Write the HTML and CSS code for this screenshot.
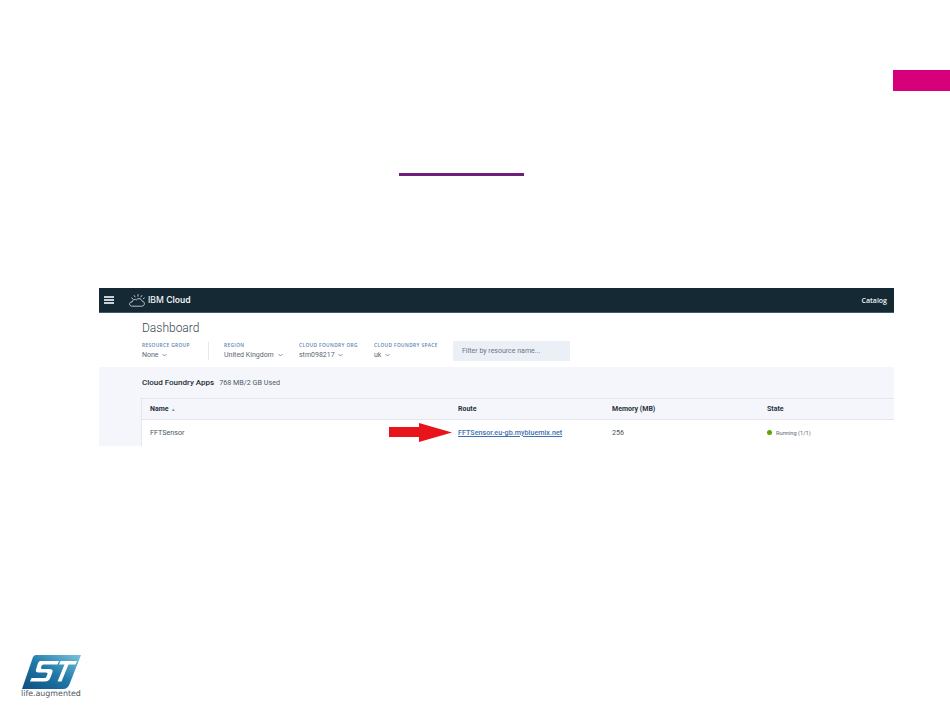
FILE: index.html
```html
<!DOCTYPE html>
<html lang="en">
<head>
<meta charset="utf-8">
<title>IBM Cloud Dashboard</title>
<link rel="stylesheet" href="styles.css">
</head>
<body>
<main class="slide">
  <div class="tab"></div>
  <div class="rule"></div>

  <section class="shot">
    <header class="topbar">
      <div class="brand">
        <span class="burger"><i></i><i></i><i></i></span>
        <svg class="cloud" width="16" height="13" viewBox="0 0 16 13" fill="none" stroke="#dfe6ea" stroke-width=".8">
          <path d="M3.2 12.2h9.6c1.5 0 2.6-1.1 2.6-2.5 0-1.3-1-2.4-2.3-2.5-.3-1.6-1.6-2.6-3.1-2.6-1 0-1.9.4-2.5 1.2-.5-.3-1-.4-1.6-.4-1.5 0-2.7 1.1-2.8 2.6C1.2 8 .5 9 .5 10c0 1.300 1.200 2.200 2.700 2.200z"/>
          <path d="M9 .2v2.400M5 1.200l1.200 2M13 1.200l-1.200 2M2.300 3.700l1.700 1.200M15.700 3.700l-1.700 1.200"/>
        </svg>
        <span class="product">IBM <b>Cloud</b></span>
      </div>
      <span class="catalog">Catalog</span>
    </header>

    <div class="intro">
      <h1>Dashboard</h1>
      <div class="filters">
        <div class="filter group">
          <span class="label">RESOURCE GROUP</span>
          <span class="value">None <svg class="chev" width="5" height="4" viewBox="0 0 5 4"><path d="M.5 1 2.500 3 4.500 1" fill="none" stroke="#5a7fa8" stroke-width=".8"/></svg></span>
        </div>
        <div class="filter region">
          <span class="label">REGION</span>
          <span class="value">United Kingdom <svg class="chev" width="5" height="4" viewBox="0 0 5 4"><path d="M.5 1 2.500 3 4.500 1" fill="none" stroke="#5a7fa8" stroke-width=".8"/></svg></span>
        </div>
        <div class="filter org">
          <span class="label">CLOUD FOUNDRY ORG</span>
          <span class="value">stm098217 <svg class="chev" width="5" height="4" viewBox="0 0 5 4"><path d="M.5 1 2.500 3 4.500 1" fill="none" stroke="#5a7fa8" stroke-width=".8"/></svg></span>
        </div>
        <div class="filter space">
          <span class="label">CLOUD FOUNDRY SPACE</span>
          <span class="value">uk <svg class="chev" width="5" height="4" viewBox="0 0 5 4"><path d="M.5 1 2.500 3 4.500 1" fill="none" stroke="#5a7fa8" stroke-width=".8"/></svg></span>
        </div>
        <div class="search">Filter by resource name...</div>
      </div>
    </div>

    <div class="apps">
      <div class="apps-title"><strong>Cloud Foundry Apps</strong><span>768 MB/2 GB Used</span></div>
      <div class="table">
        <div class="row head">
          <span class="col-name">Name <em class="sort">▴</em></span>
          <span class="col-route">Route</span>
          <span class="col-mem">Memory (MB)</span>
          <span class="col-state">State</span>
        </div>
        <div class="row body">
          <span class="col-name">FFTSensor</span>
          <span class="col-route"><a href="#">FFTSensor.eu-gb.mybluemix.net</a></span>
          <span class="col-mem">256</span>
          <span class="col-state"><i class="dot"></i>Running (1/1)</span>
        </div>
      </div>
    </div>

    <svg class="arrow" width="63" height="19" viewBox="0 0 63 19">
      <path d="M0 4h30V0l33 9.500L30 19v-5H0z" fill="#e8141c"/>
    </svg>
  </section>

  <figure class="logo">
    <svg width="60" height="34" viewBox="0 0 60 34">
      <defs>
        <linearGradient id="st" x1="0" y1="1" x2="1" y2="0">
          <stop offset="0" stop-color="#0d4f80"/>
          <stop offset=".5" stop-color="#1f78a8"/>
          <stop offset="1" stop-color="#7cc4de"/>
        </linearGradient>
      </defs>
      <path d="M11 2Q12 0 14 0H59L48 28Q46 34 41 34H0z" fill="url(#st)"/>
      <path d="M18.500 6H37L35.500 9.500H21.500Q20 9.500 19.500 11L19 12.500Q18.700 14 20.500 14H27Q31.500 14 30.500 17L28.500 22.500Q27 26.500 23 26.500H8L9.500 23H22.500Q24 23 24.500 21.500L25.500 19Q26 17.500 24 17.500H16.500Q13 17.500 14 14.500L15.500 9.500Q16.500 6 18.500 6Z" fill="#fff"/>
      <path d="M38.500 6H55L53.500 9.500H46.500L39.500 26.500H35.500L42.500 9.500H37Z" fill="#fff"/>
    </svg>
    <figcaption>life.augmented</figcaption>
  </figure>
</main>
</body>
</html>
```

FILE: styles.css
```css
* { box-sizing: border-box; }

html, body {
  margin: 0;
  padding: 0;
  background: #fff;
}

.slide {
  position: relative;
  width: 950px;
  height: 713px;
  overflow: hidden;
  font-family: Roboto, "Liberation Sans", sans-serif;
  color: #2b3440;
}

.tab {
  position: absolute;
  left: 893px;
  top: 70px;
  width: 57px;
  height: 21px;
  background: #d6007a;
}

.rule {
  position: absolute;
  left: 399px;
  top: 173px;
  width: 125px;
  height: 3px;
  background: #6d1f7a;
}

.shot {
  position: absolute;
  left: 99px;
  top: 288px;
  width: 795px;
  height: 158px;
  overflow: hidden;
  display: flex;
  flex-direction: column;
  background: #fff;
}

.topbar {
  height: 25px;
  flex: none;
  display: flex;
  align-items: center;
  justify-content: space-between;
  padding: 0 7px 0 5px;
  background: #152935;
  border-bottom: 1px solid #3d5a66;
  color: #fff;
}

.brand {
  display: flex;
  align-items: center;
}

.burger {
  width: 10px;
  display: flex;
  flex-direction: column;
  gap: 1.500px;
  margin-right: 15px;
}

.burger i {
  display: block;
  height: 1.500px;
  background: #c9d2d8;
}

.cloud {
  margin-right: 3px;
}

.product {
  font-family: Inter, Roboto, sans-serif;
  font-size: 8.600px;
  font-weight: 500;
  color: #eef2f4;
}

.product b {
  font-weight: 600;
}

.catalog {
  font-family: "Open Sans", sans-serif;
  font-size: 7px;
  font-weight: 600;
  color: #f2f5f6;
}

.intro {
  height: 54px;
  flex: none;
  padding: 8px 0 0 43px;
}

h1 {
  margin: 0;
  font-size: 12px;
  line-height: 15px;
  font-weight: 300;
  color: #3a4650;
}

.filters {
  margin-top: 6px;
  display: flex;
  align-items: flex-start;
}

.filter {
  display: flex;
  flex-direction: column;
  gap: 2px;
}

.group { width: 66px; }
.region { width: 76px; padding-left: 15px; border-left: 1px solid #e6e9ee; margin-right: 15px; }
.org { width: 75px; }
.space { width: 79px; }

.label {
  font-family: "Open Sans", sans-serif;
  font-size: 4.800px;
  line-height: 7px;
  font-weight: 600;
  letter-spacing: .38px;
  white-space: nowrap;
  color: #5b7fb0;
}

.value {
  font-size: 7px;
  line-height: 9px;
  white-space: nowrap;
  color: #5d6872;
}

.chev {
  margin-left: 2px;
  vertical-align: 0;
}

.search {
  width: 117px;
  height: 20px;
  margin-top: -1px;
  padding-left: 9px;
  font-size: 7px;
  line-height: 20px;
  color: #6b7682;
  background: #ebf0f7;
}

.apps {
  flex: 1;
  padding: 11px 0 0 42px;
  background: #f4f6fb;
}

.apps-title {
  display: flex;
  align-items: baseline;
  gap: 5px;
  height: 20px;
  padding-left: 1px;
  line-height: 10px;
}

.apps-title strong {
  font-size: 8px;
  font-weight: 500;
  color: #232c36;
}

.apps-title span {
  font-size: 7.200px;
  color: #505b66;
}

.table {
  border-top: 1px solid #e3e6ed;
  border-left: 1px solid #e3e6ed;
}

.row {
  display: grid;
  grid-template-columns: 308px 154px 155px 1fr;
  padding-left: 8px;
  align-items: center;
  font-size: 7.200px;
}

.row.head {
  height: 21px;
  border-bottom: 1px solid #e3e6ed;
  font-weight: 700;
  font-size: 7px;
  color: #2a323b;
}

.row.body {
  height: 27px;
  background: #fff;
  color: #4d5761;
  padding-bottom: 2px;
}

.sort {
  font-style: normal;
  font-size: 5px;
  color: #7b8794;
  margin-left: 2px;
  font-weight: 400;
}

.col-route a {
  color: #3d70b2;
  font-weight: 500;
}

.col-state {
  display: flex;
  align-items: center;
  font-size: 5.700px;
  color: #5e6874;
}

.row.head .col-state {
  font-size: 7px;
  color: #2a323b;
}

.dot {
  width: 5px;
  height: 5px;
  border-radius: 50%;
  background: #5aa700;
  margin-right: 4px;
}

.arrow {
  position: absolute;
  left: 290px;
  top: 135px;
}

.logo {
  position: absolute;
  left: 22px;
  top: 655px;
  margin: 0;
  width: 60px;
}

.logo svg {
  display: block;
}

.logo figcaption {
  margin-left: -1px;
  font-family: "DejaVu Sans", sans-serif;
  font-size: 7.900px;
  line-height: 9px;
  white-space: nowrap;
  color: #4b5560;
}
```
